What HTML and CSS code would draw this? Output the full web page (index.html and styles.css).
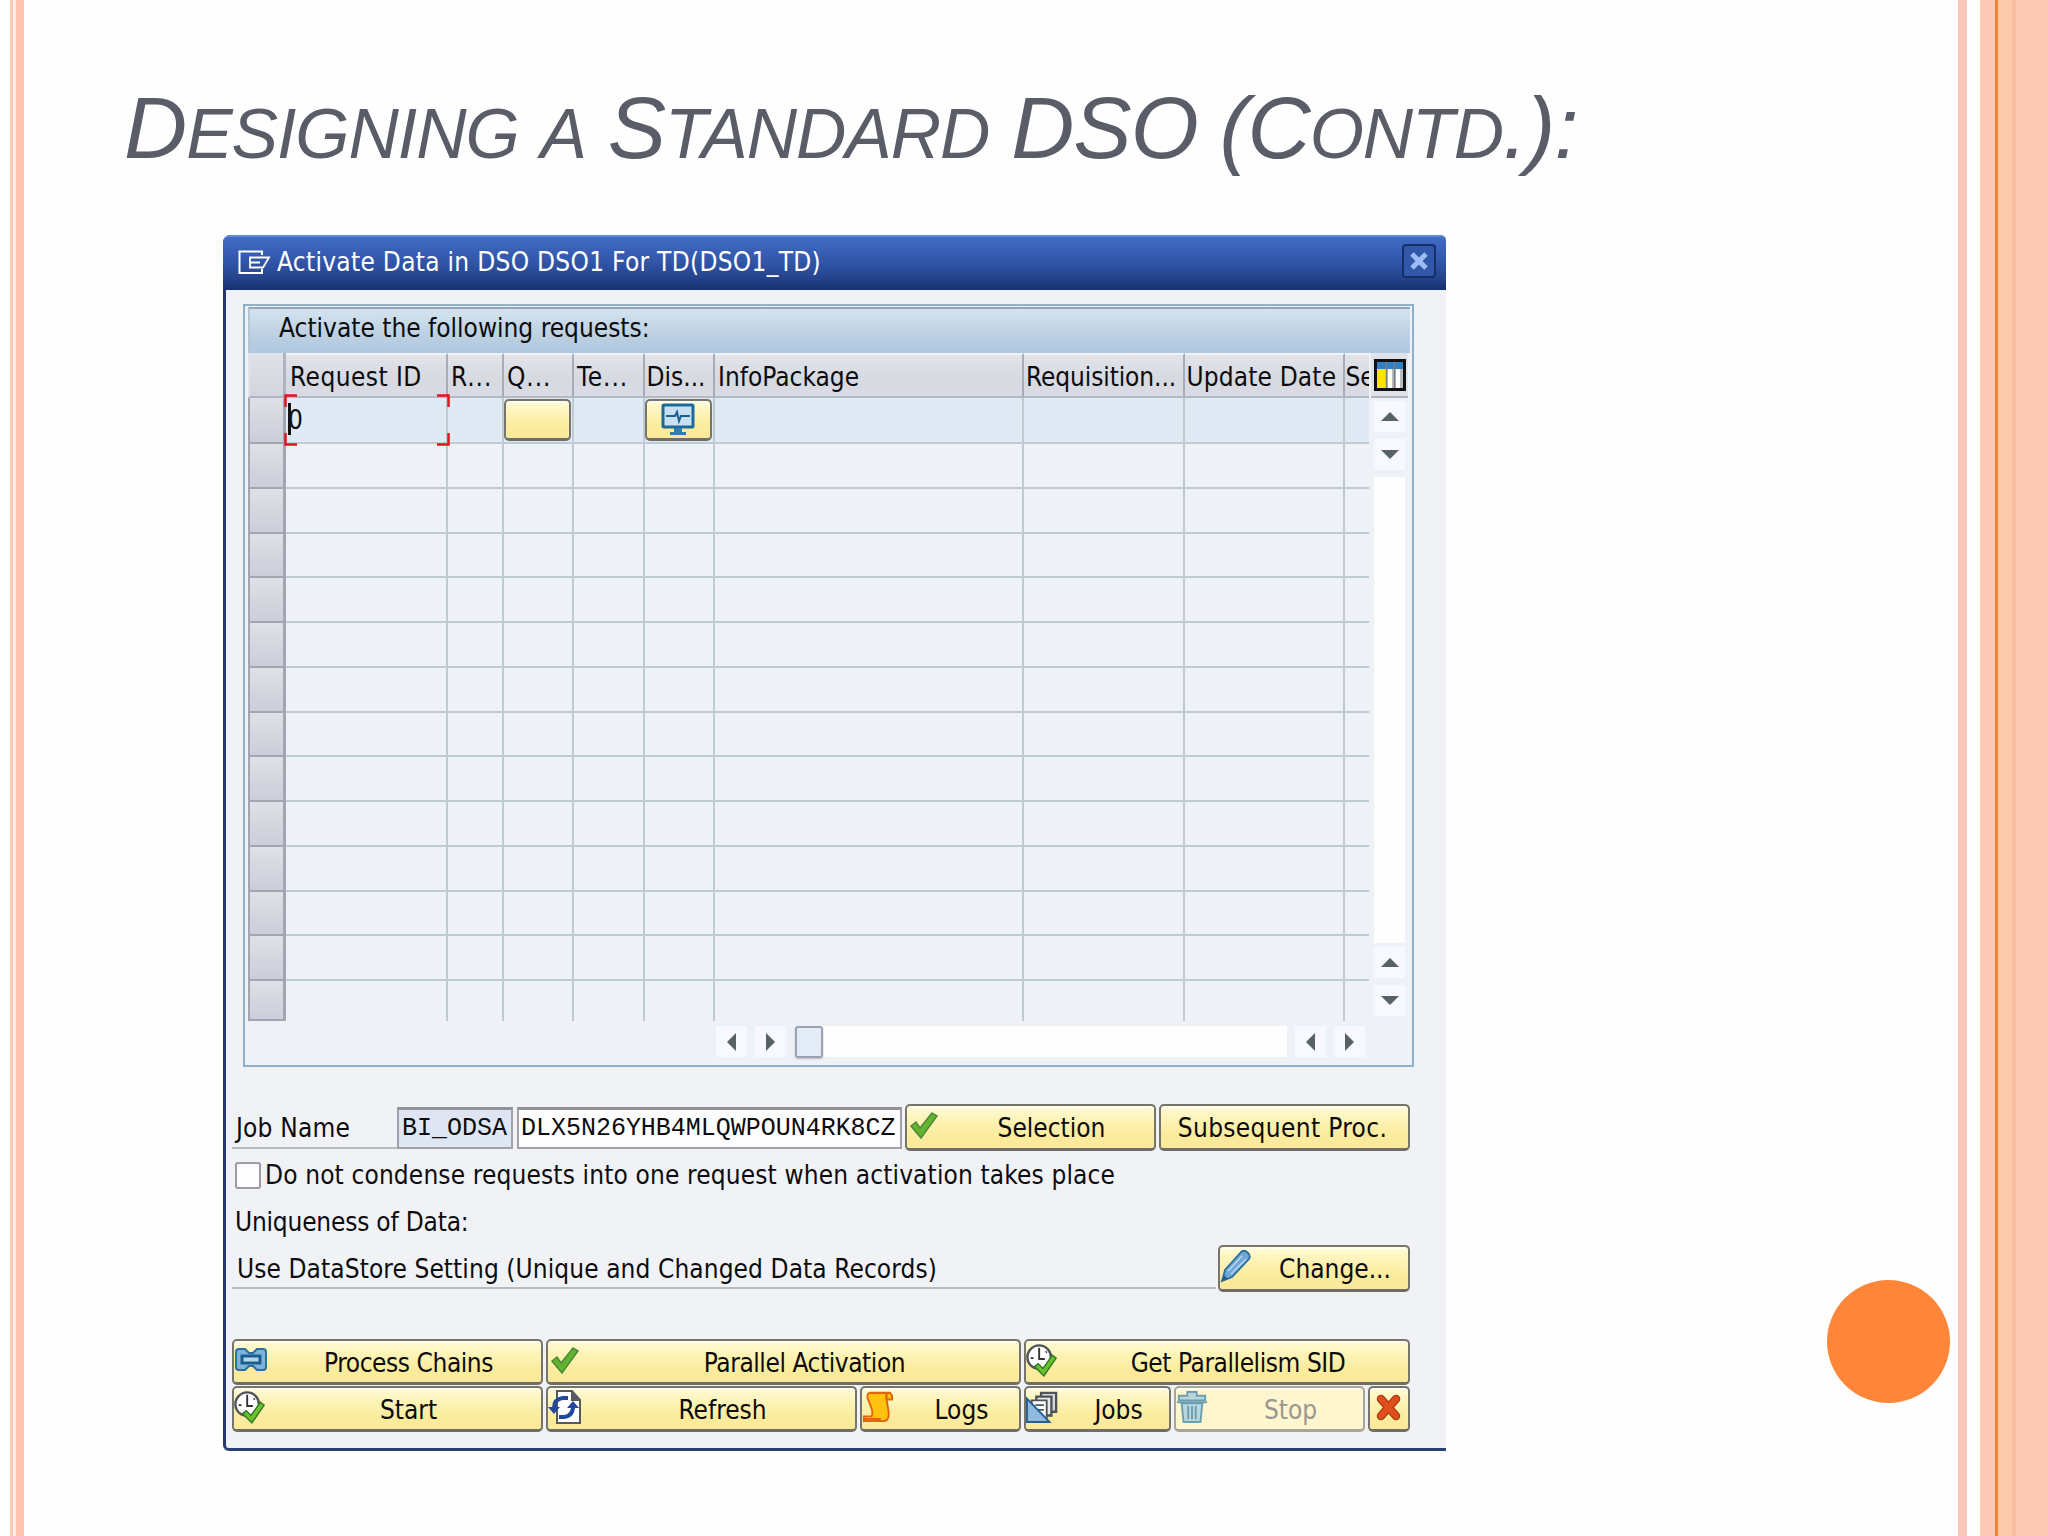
FILE: index.html
```
<!DOCTYPE html>
<html lang="en">
<head>
    <meta charset="UTF-8">
    <meta name="viewport" content="width=device-width, initial-scale=1.0">
    <title>Designing a Standard DSO</title>
    <link rel="stylesheet" href="styles.css">
</head>
<body>
    <svg class="defs" width="0" height="0">
        <symbol id="check" viewBox="0 0 32 32">
            <path d="M4 17 L9 13 L13 19 L25 4 L30 7 L14 29 Z" fill="#63b32e" stroke="#4a8a3a" stroke-width="1.5"/>
        </symbol>
        <symbol id="clock" viewBox="0 0 34 38">
            <circle cx="14" cy="16" r="12.5" fill="#fff" stroke="#4d5357" stroke-width="2.5"/>
            <path d="M14 6 V18 H20 M5 17 H8 M21 11 L22 10" fill="none" stroke="#333" stroke-width="2"/>
            <path d="M9 26 L13 23 L18 28 L28 14 L32 17 L19 36 Z" fill="#6cc02f" stroke="#2f7a24" stroke-width="1.5"/>
        </symbol>
    </svg>

    <div class="slide">
        <h1 class="title">D<small>ESIGNING</small> <small>A</small> S<small>TANDARD</small> DSO (C<small>ONTD</small>.):</h1>

        <div class="dialog">
            <div class="titlebar">
                <svg class="exit-icon" viewBox="0 0 33 25">
                    <path d="M24 5 V1.500 H1.500 V23 H24 V19" fill="none" stroke="#fff" stroke-width="2"/>
                    <path d="M12 7.500 H31 L25 17.500 H12 Z M12 12.500 H22" fill="none" stroke="#fff" stroke-width="1.800"/>
                </svg>
                <span class="caption">Activate Data in DSO DSO1 For TD(DSO1_TD)</span>
                <span class="close">
                    <svg viewBox="0 0 20 20"><path d="M3 3 L17 17 M17 3 L3 17" stroke="#9dbcf5" stroke-width="5"/></svg>
                </span>
            </div>

            <div class="panel">
                <div class="panel-head">Activate the following requests:</div>
                <div class="table-wrap">
                    <div class="table">
                        <div class="row head">
                            <div class="cell sel"></div>
                            <div class="cell">Request ID</div>
                            <div class="cell short">R...</div>
                            <div class="cell short">Q...</div>
                            <div class="cell short">Te...</div>
                            <div class="cell dis">Dis...</div>
                            <div class="cell">InfoPackage</div>
                            <div class="cell req">Requisition...</div>
                            <div class="cell upd">Update Date</div>
                            <div class="cell last">Se</div>
                        </div>
                        <div class="row active">
                            <div class="cell sel"></div>
                            <div class="cell focus">0<i class="caret"></i>
                                <svg class="corners" viewBox="0 0 166 52"><path d="M1.5 13 V1.5 H13 M153 1.5 H164.5 V13 M164.5 39 V50.500 H153 M13 50.500 H1.5 V39" fill="none" stroke="#e0141c" stroke-width="2.5"/></svg>
                            </div>
                            <div class="cell"></div>
                            <div class="cell"><span class="btn mini"></span></div>
                            <div class="cell"></div>
                            <div class="cell"><span class="btn mini">
                                <svg width="34" height="34" viewBox="0 0 34 34">
                                    <rect x="2" y="2" width="30" height="22" rx="1" fill="#c9dff2" stroke="#1b6a9a" stroke-width="3"/>
                                    <path d="M5 13 H14 L16 9 L18 18 L20 13 H29" fill="none" stroke="#1b5f90" stroke-width="2"/>
                                    <path d="M13 25 H21 V29 H25 V32 H9 V29 H13 Z" fill="#2b7fb0"/>
                                </svg></span></div>
                            <div class="cell"></div>
                            <div class="cell"></div>
                            <div class="cell"></div>
                            <div class="cell last"></div>
                        </div>
                    </div>
                    <div class="vscroll">
                        <div class="config">
                            <svg width="32" height="32" viewBox="0 0 32 32">
                                <rect x="1.500" y="1.500" width="29" height="29" fill="#b9bcc0" stroke="#111" stroke-width="3"/>
                                <path d="M3 3 H29 V10 H3 Z" fill="#2f7fc4"/>
                                <path d="M3 10 H12 V29 H3 Z" fill="#ffe500"/>
                                <path d="M14 10 H18 V29 H14 Z M22 10 H26 V29 H22 Z" fill="#fff"/>
                                <path d="M12.500 3 V29 M20.500 3 V29" stroke="#7b7f86" stroke-width="1.500"/>
                            </svg>
                        </div>
                        <span class="arrow"><i class="up"></i></span>
                        <span class="arrow"><i class="down"></i></span>
                        <div class="track"></div>
                        <span class="arrow"><i class="up"></i></span>
                        <span class="arrow"><i class="down"></i></span>
                    </div>
                </div>
                <div class="hscroll">
                    <span class="arrow"><i class="left"></i></span>
                    <span class="arrow"><i class="right"></i></span>
                    <div class="track"><span class="thumb"></span></div>
                    <span class="arrow"><i class="left"></i></span>
                    <span class="arrow"><i class="right"></i></span>
                </div>
            </div>

            <div class="job">
                <label class="job-label">Job Name</label>
                <span class="field prefix">BI_ODSA</span>
                <span class="field name">DLX5N26YHB4MLQWPOUN4RK8CZ</span>
                <span class="btn selection"><svg class="icon" viewBox="0 0 32 32"><use href="#check"/></svg><b>Selection</b></span>
                <span class="btn subsequent"><b>Subsequent Proc.</b></span>
            </div>
            <div class="condense"><span class="checkbox"></span>Do not condense requests into one request when activation takes place</div>
            <div class="unique">Uniqueness of Data:</div>
            <div class="setting">
                <div class="setting-text">Use DataStore Setting (Unique and Changed Data Records)</div>
                <span class="btn change">
                    <svg class="icon" viewBox="0 0 32 34">
                        <path d="M2 32 L5 21 L21 3 Q24 0 28 4 Q31 7 29 10 L12 28 Z" fill="#6fa8d6" stroke="#2d6d9f" stroke-width="1.800"/>
                        <path d="M8 22 L22 7 M11 25 L26 10" stroke="#b8d6ee" stroke-width="1.500"/>
                        <path d="M2 32 L4 26 L8 30 Z" fill="#1f5f94"/>
                    </svg><b>Change...</b></span>
            </div>

            <div class="buttons first">
                <span class="btn"><svg class="icon chain" viewBox="0 0 34 28">
                    <path d="M11 3 H5 Q2 3 2 6 V21 Q2 24 5 24 H11 L15 20 H19 L23 24 H29 Q32 24 32 21 V6 Q32 3 29 3 H23 L19 7 H15 Z" fill="#7db4dc" stroke="#2a6fa3" stroke-width="2"/>
                    <rect x="8" y="10" width="18" height="7" fill="#b5d6ea" stroke="#1c5f8f" stroke-width="3"/>
                </svg><b class="tight">Process Chains</b></span>
                <span class="btn"><svg class="icon" viewBox="0 0 32 32"><use href="#check"/></svg><b class="tight">Parallel Activation</b></span>
                <span class="btn"><svg class="icon clock" viewBox="0 0 34 38"><use href="#clock"/></svg><b class="tight">Get Parallelism SID</b></span>
            </div>
            <div class="buttons second">
                <span class="btn"><svg class="icon clock" viewBox="0 0 34 38"><use href="#clock"/></svg><b>Start</b></span>
                <span class="btn"><svg class="icon page" viewBox="0 0 34 36">
                    <path d="M9 2 H24 L32 11 V34 H9 Z" fill="#fff" stroke="#55585c" stroke-width="2"/>
                    <path d="M23 2 V12 H32 Z" fill="#55585c"/>
                    <path d="M6 19 Q6 10 15 9 H20 M25 17 Q25 27 16 28 H11" fill="none" stroke="#22489c" stroke-width="4"/>
                    <path d="M0 18 H12 L6 25 Z M19 19 H31 L25 12 Z" fill="#22489c"/>
                </svg><b>Refresh</b></span>
                <span class="btn"><svg class="icon" viewBox="0 0 34 34">
                    <path d="M8 2 H30 L32 5 V9 H26 L28 20 Q30 30 24 32 H2 V27 H10 Q12 24 10 18 L6 8 Q5 3 8 2 Z" fill="#ffc20e" stroke="#e0650c" stroke-width="2"/>
                    <path d="M8 2 H30 M2 30 H20 M26 3 V9" fill="none" stroke="#e0650c" stroke-width="2.500"/>
                </svg><b>Logs</b></span>
                <span class="btn"><svg class="icon" viewBox="0 0 34 34">
                    <path d="M16 2 H32 V22 H16 Z" fill="#d9dbdc" stroke="#4f5356" stroke-width="2.500"/>
                    <path d="M11 6 H27 V26 H11 Z" fill="#e8e9ea" stroke="#4f5356" stroke-width="2.500"/>
                    <path d="M6 10 H22 V31 H6 Z" fill="#fff" stroke="#4f5356" stroke-width="2"/>
                    <path d="M10 15 H19 M13 20 H19" stroke="#4f5356" stroke-width="2"/>
                    <path d="M1 8 V33 H25 Z" fill="#8dbadd" stroke="#22608f" stroke-width="2"/>
                </svg><b>Jobs</b></span>
                <span class="btn disabled"><svg class="icon" viewBox="0 0 34 34">
                    <path d="M12 5 V1 H22 V5 H31 V10 H3 V5 Z" fill="#b9d5dd" stroke="#6b9fb0" stroke-width="2"/>
                    <path d="M1 12 H33 M6 13 L8 33 H26 L28 13 Z" fill="#b9d5dd" stroke="#6b9fb0" stroke-width="2"/>
                    <path d="M13 16 V30 M17 16 V30 M21 16 V30" stroke="#6b9fb0" stroke-width="2"/>
                </svg><b>Stop</b></span>
                <span class="btn cancel"><svg width="26" height="28" viewBox="0 0 26 28"><path d="M5 5 L20 22 M20 5 L5 22" stroke="#a8350f" stroke-width="8.500" stroke-linecap="round"/><path d="M5 5 L20 22 M20 5 L5 22" stroke="#e04f1b" stroke-width="6" stroke-linecap="round"/></svg></span>
            </div>
        </div>

        <div class="dot"></div>
    </div>

    <script>
        // empty request rows
        const table = document.querySelector('.table');
        for (let i = 0; i < 13; i++) {
            const row = document.createElement('div');
            row.className = 'row';
            for (let j = 0; j < 10; j++) {
                const cell = document.createElement('div');
                cell.className = 'cell' + (j === 0 ? ' sel' : '') + (j === 9 ? ' last' : '');
                row.appendChild(cell);
            }
            table.appendChild(row);
        }
    </script>
</body>
</html>
```
FILE: styles.css
```
* { box-sizing: border-box; }
body { margin: 0; background: #fefefe; }
.defs { display: block; position: absolute; }

.slide {
    position: relative;
    width: 2048px;
    height: 1536px;
    padding: 78px 0 0 223px;
    overflow: hidden;
    background: linear-gradient(to right,
        #fff 10px, #ffc9b8 10px 13px, #fff3ee 13px 15px, #ffe3da 15px 16px, #ffc3b1 16px 24px,
        #fefefe 24px 1958px, #fdc7b7 1958px 1967px, #fefefe 1967px 1980px,
        #fdc8b5 1980px 1995px, #f08337 1995px 1998px, #fecaac 1998px 2012px,
        #fbbda0 2012px 2016px, #fcc9b5 2016px);
}
.title {
    height: 100px;
    margin: 0 0 57px -99px;
    font: italic 400 87.5px/100px "Liberation Sans", Arial, sans-serif;
    letter-spacing: -1.05px;
    word-spacing: -1.5px;
    color: #5a5c68;
    white-space: nowrap;
}
.title small { font-size: 0.797em; }
.dot {
    position: absolute;
    left: 1827px;
    top: 1280px;
    width: 123px;
    height: 123px;
    border-radius: 50%;
    background: #ff8639;
}

/* dialog */
.dialog {
    width: 1223px;
    height: 1216px;
    border-left: 3px solid #24386f;
    border-bottom: 3px solid #27406f;
    border-radius: 8px 6px 0 6px;
    background: #f0f2f6;
    font: 26px/36px "DejaVu Sans Condensed", "DejaVu Sans", sans-serif;
    color: #0c0c0e;
    white-space: nowrap;
}
.titlebar {
    display: flex;
    align-items: center;
    height: 55px;
    margin-left: -3px;
    padding: 0 10px 0 15px;
    border-radius: 7px 5px 0 0;
    border-top: 2px solid #5f8ad0;
    background: linear-gradient(#426bc4, #3359ae 40%, #26458f 75%, #15306e);
    color: #fff;
}
.exit-icon { width: 33px; height: 25px; margin: -3px 6px 0 0; }
.caption { flex: 1; margin-top: -4px; letter-spacing: 0.29px; }
.close {
    display: flex;
    align-items: center;
    justify-content: center;
    width: 34px;
    height: 34px;
    margin-top: -6px;
    border: 2px solid #152f6b;
    border-radius: 4px;
    background: #3158a8;
}
.close svg { width: 20px; height: 20px; }

/* request table */
.panel {
    width: 1171px;
    height: 763px;
    margin: 14px 0 0 17px;
    padding: 1px 2px 1px 3px;
    border: 2px solid #8eb0cc;
    background: #eef2f7;
}
.panel-head {
    height: 46px;
    padding-left: 29px;
    border-top: 2px solid #93a5bc;
    border-left: 2px solid #b5c4d6;
    background: linear-gradient(#d5e3f0, #bcd0e0 60%, #b0c8e2);
    line-height: 38px;
}
.table-wrap { display: flex; justify-content: space-between; padding-right: 2px; }
.table {
    display: grid;
    grid-template-rows: 45px 46px repeat(12, 44.75px) 40px;
    width: 1121px;
}
.row {
    display: grid;
    grid-template-columns: 38px 162px 56px 70px 70.5px 70.5px 309px 160.5px 160px 24px;
}
.cell {
    position: relative;
    min-width: 0;
    border-right: 2px solid #bfcbd2;
    border-bottom: 2px solid #bfcbd2;
}
.cell.last { border-right: 0; }
.row:last-child .cell { border-bottom: 0; }
.row .cell.sel {
    border: 2px solid #a3a5b2;
    border-top: 0;
    border-right-width: 3px;
    background: linear-gradient(#dfe1e7, #cbcdd8);
}
.active .cell { background: #dfeaf5; }
.head .cell {
    overflow: hidden;
    padding-left: 4px;
    border-right-color: #a8acb8;
    border-bottom-color: #b2b8c4;
    border-top: 2px solid #eef1f6;
    background: linear-gradient(#e2e4ea, #d6d9e0 60%, #d9dce4);
    line-height: 45px;
}
.head .cell:nth-child(2) { letter-spacing: 0.45px; }
.head .cell:nth-child(n+3) { padding-left: 3px; }
.head .cell.short { letter-spacing: 0.9px; }
.head .cell.dis { padding-left: 2px; }
.head .cell.req { padding-left: 2px; letter-spacing: -0.1px; }
.head .cell.upd { padding-left: 2px; letter-spacing: 0.15px; }
.head .cell.last { padding-left: 1px; }
.row.head .cell.sel {
    border-color: #b0b3c0;
    border-left-color: #dfe3ea;
    background: linear-gradient(#dfe2e9, #d2d5dd);
}
.focus { padding-left: 2px; line-height: 44px; }
.caret { position: absolute; left: 2px; top: 5px; width: 3px; height: 32px; background: #111; }
.corners { position: absolute; left: -2px; top: -4px; width: 166px; height: 52px; z-index: 1; }

.vscroll { display: flex; flex-direction: column; align-items: center; width: 37px; }
.config {
    display: flex;
    align-items: center;
    justify-content: center;
    width: 37px;
    height: 45px;
    margin-bottom: 3px;
    border-bottom: 2px solid #b2b4bd;
    background: #dfe2e8;
}
.arrow {
    display: flex;
    flex: none;
    align-items: center;
    justify-content: center;
    width: 31px;
    height: 31px;
    background: #f8f9fe;
}
.arrow i { border: 9px solid transparent; }
.arrow .up { border-bottom-color: #566168; border-top: 0; }
.arrow .down { border-top-color: #566168; border-bottom: 0; }
.arrow .left { border-right-color: #566168; border-left: 0; }
.arrow .right { border-left-color: #566168; border-right: 0; }
.vscroll .arrow { margin-bottom: 7px; }
.vscroll .arrow:last-child { margin-bottom: 5px; }
.track { background: #fefefe; }
.vscroll .track { flex: 1; width: 31px; margin-bottom: 4px; }
.hscroll { display: flex; height: 31px; margin: 5px 45px 0 468px; gap: 8px; }
.hscroll .track { flex: 1; margin: 0 -3px 0 1px; }
.thumb {
    display: block;
    width: 28px;
    height: 32px;
    border: 2px solid #9ca2b2;
    border-radius: 3px;
    background: #e3ecf6;
    box-shadow: 0 1px 2px #b8bcc8;
}
.hscroll .track + .arrow { margin-left: 3px; }

/* buttons */
.btn {
    display: flex;
    align-items: center;
    height: 46px;
    border: 2px solid #77756a;
    border-bottom: 3px solid #6f6d66;
    border-radius: 5px;
    background: linear-gradient(#fffbd8, #fdf3b4 35%, #fbeb9c 70%, #fbe99a);
    box-shadow: inset 0 2px 1px #fffdee;
}
.btn b { flex: 1; padding: 2px 0 0 2px; font-weight: 400; text-align: center; }
.btn .tight { letter-spacing: -0.43px; }
.icon { flex: none; width: 32px; height: 34px; margin: -4px 8px 0 0; }
.icon.clock { height: 38px; }
.icon.chain { width: 34px; height: 28px; margin-right: 6px; }
.icon.page { width: 34px; height: 36px; margin-right: 6px; }
.mini { justify-content: center; height: 42px; margin: 1px 1px 0 0; }
.disabled { background: #fdf6cf; border-color: #a9a699; color: #9a988f; }
.cancel { justify-content: center; padding-bottom: 1px; }

/* job form */
.job { display: flex; align-items: flex-start; height: 50px; margin: 37px 0 0 6px; }
.job-label { width: 165px; height: 45px; padding-left: 4px; border-bottom: 2px solid #b9bac0; line-height: 49px; letter-spacing: 0.2px; }
.field {
    height: 42px;
    margin-top: 3px;
    border: 2px solid #a0a2a8;
    border-top: 3px solid #909298;
    background: #fdfdfe;
    font: 25px/37px "Liberation Mono", "Courier New", monospace;
    letter-spacing: -0.02px;
}
.prefix { width: 116px; padding-left: 3px; background: linear-gradient(#e0e4f3, #dde8f4); }
.name { width: 385px; margin-left: 4px; padding-left: 2px; }
.selection { width: 251px; height: 47px; margin-left: 3px; }
.subsequent { width: 251px; height: 47px; margin-left: 3px; letter-spacing: 0.35px; }
.subsequent b { padding: 2px 4px 0 0; }
.condense { display: flex; align-items: center; height: 36px; margin: 3px 0 0 9px; letter-spacing: 0.14px; }
.checkbox { width: 26px; height: 27px; margin-right: 4px; border: 2px solid #9b9ca2; border-radius: 3px; background: #fdfdfe; }
.unique { margin: 11px 0 0 9px; letter-spacing: -0.2px; }
.setting { display: flex; align-items: flex-start; margin: 5px 0 0 6px; }
.setting-text { width: 984px; height: 44px; padding-left: 5px; border-bottom: 2px solid #b9bac0; line-height: 48px; letter-spacing: 0.09px; }
.change { width: 192px; height: 47px; margin-left: 2px; }
.buttons { display: grid; column-gap: 3px; margin-left: 6px; }
.first { grid-template-columns: 311px 475px 386px; margin-top: 47px; }
.second { grid-template-columns: 311px 311px 161px 147px 191px 42px; margin-top: 1px; }
```
